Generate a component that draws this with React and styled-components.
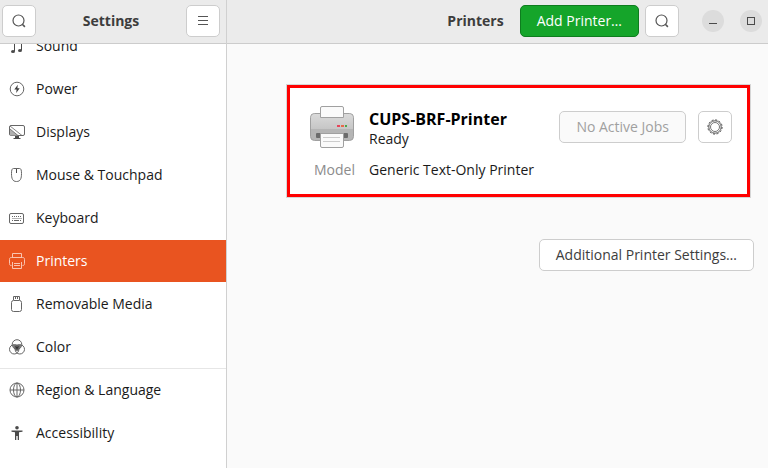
import { useState } from "react";
import styled, { createGlobalStyle } from "styled-components";

const items = [
  { id: "sound", label: "Sound", Icon: SoundIcon },
  { id: "power", label: "Power", Icon: PowerIcon },
  { id: "displays", label: "Displays", Icon: DisplaysIcon },
  { id: "mouse", label: "Mouse & Touchpad", Icon: MouseIcon },
  { id: "keyboard", label: "Keyboard", Icon: KeyboardIcon },
  { id: "printers", label: "Printers", Icon: PrinterIcon },
  { id: "media", label: "Removable Media", Icon: MediaIcon },
  { id: "color", label: "Color", Icon: ColorIcon, divided: true },
  { id: "region", label: "Region & Language", Icon: RegionIcon },
  { id: "accessibility", label: "Accessibility", Icon: AccessibilityIcon },
];

export default function App() {
  const [selected, setSelected] = useState("printers");

  return (
    <>
      <GlobalStyle />
      <Window>
        <Side>
          <SideHeader>
            <IconButton aria-label="Search settings">
              <SearchIcon />
            </IconButton>
            <Title>Settings</Title>
            <IconButton aria-label="Menu">
              <MenuIcon />
            </IconButton>
          </SideHeader>
          <Scroller>
            <List>
              {items.map(({ id, label, Icon, divided }) => (
                <Item key={id} $divided={divided}>
                  <Row
                    href={`#${id}`}
                    $active={id === selected}
                    aria-current={id === selected ? "page" : undefined}
                    onClick={() => setSelected(id)}
                  >
                    <Icon />
                    {label}
                  </Row>
                </Item>
              ))}
            </List>
          </Scroller>
        </Side>

        <Content>
          <MainHeader>
            <Title>Printers</Title>
            <AddButton>Add Printer…</AddButton>
            <IconButton aria-label="Search printers">
              <SearchIcon />
            </IconButton>
            <WindowControls>
              <RoundButton aria-label="Minimize">
                <svg width="8" height="8" viewBox="0 0 8 8">
                  <path d="M0 6.5h8" stroke="#4a4a4a" />
                </svg>
              </RoundButton>
              <RoundButton aria-label="Maximize">
                <svg width="8" height="8" viewBox="0 0 8 8">
                  <rect x="0.5" y="0.5" width="7" height="7" fill="none" stroke="#4a4a4a" />
                </svg>
              </RoundButton>
            </WindowControls>
          </MainHeader>
          <Main>
            <Card>
              <PrinterPicture />
              <div>
                <Name>CUPS-BRF-Printer</Name>
                <Text>Ready</Text>
              </div>
              <Actions>
                <Button disabled>No Active Jobs</Button>
                <IconButton aria-label="Printer options">
                  <GearIcon />
                </IconButton>
              </Actions>
              <Label>Model</Label>
              <Text>Generic Text-Only Printer</Text>
            </Card>
            <Footer>
              <Button>Additional Printer Settings…</Button>
            </Footer>
          </Main>
        </Content>
      </Window>
    </>
  );
}

function SearchIcon() {
  return (
    <svg width="16" height="16" viewBox="0 0 16 16" fill="none" stroke="#555">
      <circle cx="7.5" cy="7.5" r="5.5" strokeWidth="1.2" />
      <path d="M11.3 11.3l2.6 2.6" strokeWidth="1.6" />
    </svg>
  );
}

function MenuIcon() {
  return (
    <svg width="16" height="16" viewBox="0 0 16 16" stroke="#555">
      <path d="M3 3.5h10M3 7.5h10M3 11.5h10" />
    </svg>
  );
}

function SoundIcon() {
  return (
    <svg width="16" height="16" viewBox="0 0 16 16" fill="none" stroke="#4a4a4a">
      <path d="M5.5 13V4.500M12.5 12V3.500M5.5 4.500l7-1" />
      <ellipse cx="4" cy="13.5" rx="2" ry="1.5" fill="#4a4a4a" stroke="none" />
      <ellipse cx="11" cy="12.5" rx="2" ry="1.5" fill="#4a4a4a" stroke="none" />
    </svg>
  );
}

function PowerIcon() {
  return (
    <svg width="16" height="16" viewBox="0 0 16 16">
      <circle cx="8" cy="8" r="6.8" fill="none" stroke="#666" />
      <path d="M8.800 3.800L5.300 8.600h2.300L7.200 12l3.500-4.700H8.400z" fill="#3d3d3d" />
    </svg>
  );
}

function DisplaysIcon() {
  return (
    <svg width="16" height="16" viewBox="0 0 16 16" fill="none" stroke="#666">
      <rect x="0.5" y="1.5" width="15" height="10" rx="1.5" />
      <path d="M1 5l8 6.5H1z" fill="#b0b0b0" stroke="none" />
      <path d="M1 2l12 9.5M1 5l8 6.5" strokeWidth="0.800" />
      <path d="M6 12h4v2h1.5v1h-7v-1H6z" fill="#4a4a4a" stroke="none" />
    </svg>
  );
}

function MouseIcon() {
  return (
    <svg width="16" height="16" viewBox="0 0 16 16" fill="none" stroke="#666">
      <path d="M4.5 1.5h6c1.500 0 2 1.500 2 5 0 5-1 8-5 8s-5-3-5-8c0-3.500.5-5 2-5z" />
      <path d="M7.500 2v4" stroke="#4a4a4a" />
    </svg>
  );
}

function KeyboardIcon() {
  return (
    <svg width="16" height="16" viewBox="0 0 16 16" fill="none" stroke="#666">
      <rect x="0.5" y="3.500" width="14" height="10" rx="1.500" />
      <path d="M3 6.500h10M3.500 8.500h9" strokeDasharray="1 1" />
      <path d="M3 10.500h1M5 10.500h5M11 10.500h1" />
    </svg>
  );
}

function PrinterIcon() {
  return (
    <svg width="16" height="16" viewBox="0 0 16 16" fill="none" stroke="#f9c4b1">
      <path d="M3.500 4.500v-4h9v4" />
      <path d="M2.500 12.500c-1.500 0-2-.5-2-2v-4c0-1.500.5-2 2-2h11c1.500 0 2 .5 2 2v4c0 1.500-.5 2-2 2" />
      <path d="M3.500 9v6.500h9V9M5 10.500h6M5 12.500h6" />
    </svg>
  );
}

function MediaIcon() {
  return (
    <svg width="16" height="16" viewBox="0 0 16 16" fill="none" stroke="#666">
      <path d="M4.500 4V.5h6V4M6.500 1v2M8.500 1v2" />
      <rect x="2.500" y="4.500" width="10" height="11" rx="2" />
    </svg>
  );
}

function ColorIcon() {
  return (
    <svg width="16" height="16" viewBox="0 0 16 16" fill="none" stroke="#666">
      <path d="M3.500 6.200q4.500-1.500 9 0L11 9.500l-3 3-3-3z" fill="#777" stroke="none" />
      <path d="M5.800 7.500L8 6.600l2.200.9-.5 2L8 11.200 6.300 9.500z" fill="#333" stroke="none" />
      <circle cx="8" cy="5.500" r="4.800" />
      <circle cx="5.200" cy="10.300" r="4.700" />
      <circle cx="10.800" cy="10.300" r="4.700" />
    </svg>
  );
}

function RegionIcon() {
  return (
    <svg width="16" height="16" viewBox="0 0 16 16" fill="none" stroke="#666">
      <circle cx="8" cy="8" r="7" />
      <ellipse cx="8" cy="8" rx="3.500" ry="7" />
      <path d="M8 1v14M1 8h14" />
    </svg>
  );
}

function AccessibilityIcon() {
  return (
    <svg width="16" height="16" viewBox="0 0 16 16" fill="#4a4a4a">
      <circle cx="8" cy="2.800" r="1.800" />
      <path d="M2.500 5.500h11v1.200L10 7.300V15H8.700v-4H7.300v4H6V7.300l-3.500-.6z" />
    </svg>
  );
}

function GearIcon() {
  return (
    <svg width="16" height="16" viewBox="0 0 16 16" fill="none" stroke="#4a4a4a">
      <circle cx="8" cy="8" r="7.100" strokeWidth="1" strokeDasharray="2 1.718" />
      <circle cx="8" cy="8" r="6.200" strokeWidth="0.900" />
      <circle cx="8" cy="8" r="4.500" stroke="#666" strokeWidth="0.900" />
    </svg>
  );
}

function PrinterPicture() {
  return (
    <Picture width="44" height="42" viewBox="0 0 44 42">
      <defs>
        <linearGradient id="body" x1="0" y1="0" x2="0" y2="1">
          <stop offset="0" stopColor="#dadada" />
          <stop offset="1" stopColor="#c6c6c6" />
        </linearGradient>
      </defs>
      <rect x="0.500" y="7.500" width="43" height="27" rx="4" fill="#b5b5b5" stroke="#a0a0a0" />
      <path d="M1 23V12q0-4 4-4h34q4 0 4 4v11z" fill="url(#body)" />
      <rect x="6" y="27" width="32" height="5" rx="1" fill="#6b6b6b" />
      <path d="M10.500 11.500V2q0-1.500 1.500-1.500h20q1.500 0 1.500 1.500v9.500z" fill="#fafafa" stroke="#a0a0a0" />
      <path d="M10.500 27.500h23V40q0 1.500-1.500 1.500H12q-1.500 0-1.500-1.500z" fill="#fafafa" stroke="#a0a0a0" />
      <path d="M13 31.500h17M13 35.500h17" stroke="#ccc" />
      <rect x="27" y="19" width="3" height="2" fill="#e6455a" />
      <rect x="31" y="19" width="3" height="2" fill="#e6694a" />
      <rect x="35" y="19" width="2" height="2" fill="#4aa84a" />
    </Picture>
  );
}

const GlobalStyle = createGlobalStyle`
  * {
    box-sizing: border-box;
  }

  body {
    margin: 0;
    font-family: "Open Sans", "Noto Sans", sans-serif;
    font-size: 14px;
    line-height: 18px;
    color: #1a1a1a;
    background: #fafafa;
  }

  button {
    font: inherit;
  }
`;

const Window = styled.div`
  display: flex;
  height: 100vh;
`;

const Side = styled.aside`
  display: flex;
  flex-direction: column;
  width: 227px;
  flex-shrink: 0;
  background: #ffffff;
  border-right: 1px solid #d0d0d0;
`;

const Content = styled.div`
  display: flex;
  flex-direction: column;
  flex: 1;
  min-width: 0;
`;

const Header = styled.header`
  display: flex;
  align-items: center;
  flex-shrink: 0;
  height: 44px;
  padding-bottom: 2px;
  background: #ebebeb;
  border-bottom: 1px solid #cccccc;
`;

const SideHeader = styled(Header)`
  justify-content: space-between;
  padding-left: 2px;
  padding-right: 6px;
`;

const MainHeader = styled(Header)`
  justify-content: flex-end;
  gap: 6px;
  padding-right: 6px;
`;

const Title = styled.h1`
  margin: 0 10px;
  font-size: 14px;
  font-weight: 700;
  color: #3d3d3d;
`;

const Button = styled.button`
  height: 32px;
  padding: 0 16px;
  color: #3d3d3d;
  background: #ffffff;
  border: 1px solid #cdcdcd;
  border-radius: 5px;
  white-space: nowrap;

  &:disabled {
    color: #a0a0a0;
    background: #fafafa;
  }
`;

const AddButton = styled(Button)`
  color: #ffffff;
  background: #15a52a;
  border-color: #0e7d1e;
`;

const IconButton = styled(Button)`
  display: flex;
  align-items: center;
  justify-content: center;
  width: 34px;
  padding: 0;
`;

const WindowControls = styled.div`
  display: flex;
  gap: 16px;
  margin-left: 17px;
`;

const RoundButton = styled.button`
  display: flex;
  align-items: center;
  justify-content: center;
  width: 22px;
  height: 22px;
  padding: 0;
  background: #dcdcdc;
  border: none;
  border-radius: 50%;
`;

const Scroller = styled.nav`
  flex: 1;
  overflow: hidden;
`;

const List = styled.ul`
  margin: -19px 0 0;
  padding: 0;
  list-style: none;
`;

const Item = styled.li`
  border-bottom: 1px solid ${({ $divided }) => ($divided ? "#e6e6e6" : "transparent")};
`;

const Row = styled.a`
  display: flex;
  align-items: center;
  gap: 11px;
  height: 42px;
  padding-left: 9px;
  text-decoration: none;
  color: ${({ $active }) => ($active ? "#ffffff" : "#1a1a1a")};
  background: ${({ $active }) => ($active ? "#e95420" : "transparent")};
`;

const Main = styled.main`
  padding: 41px 14px 0 60px;
`;

const Card = styled.section`
  display: grid;
  grid-template-columns: 45px 1fr auto;
  column-gap: 14px;
  row-gap: 13px;
  margin-right: 4px;
  padding: 18px 15px 15px 20px;
  background: #ffffff;
  border: 3px solid #ff0000;
  outline: 1px solid #d6d6d6;
`;

const Picture = styled.svg`
  display: block;
`;

const Name = styled.h2`
  margin: 2px 0 0;
  font-size: 16px;
  line-height: 22px;
  font-weight: 700;
  color: #000000;
`;

const Text = styled.p`
  margin: 0;
`;

const Actions = styled.div`
  display: flex;
  align-items: center;
  gap: 12px;
`;

const Label = styled(Text)`
  justify-self: end;
  color: #8c8c8c;
`;

const Footer = styled.footer`
  display: flex;
  justify-content: flex-end;
  margin-top: 42px;
`;
